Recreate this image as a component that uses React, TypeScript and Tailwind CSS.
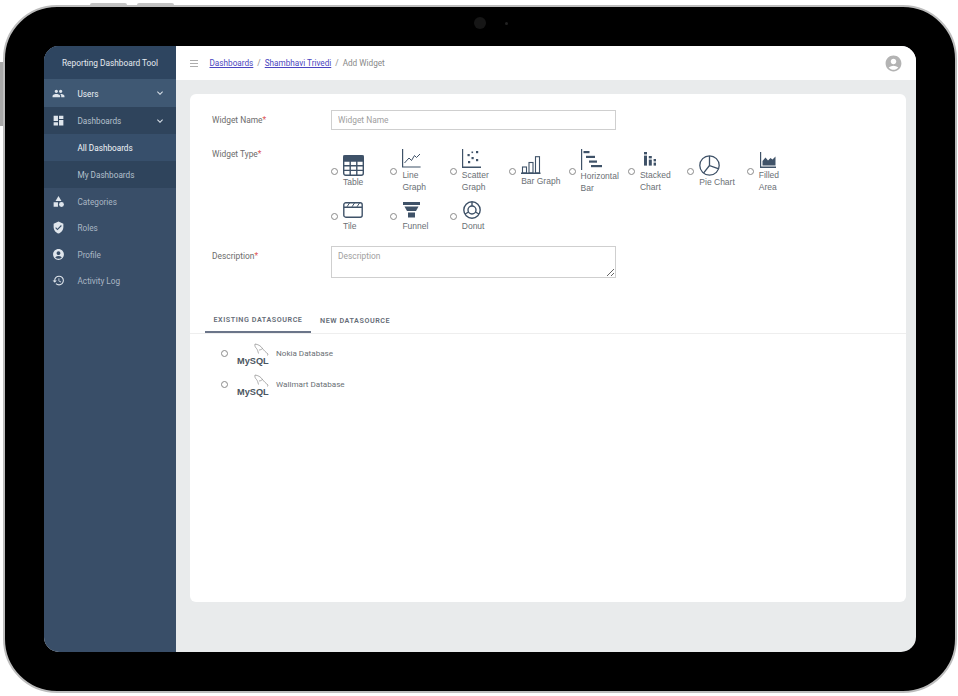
import React from "react";
import { MdPeople, MdDashboard, MdCategory, MdVerifiedUser, MdAccountCircle, MdHistory, MdExpandMore } from "react-icons/md";

const ink = "#3f5268";

const Ico = {
  table: (
    <svg width="21" height="21" viewBox="0 0 21 21" fill="none" stroke={ink} strokeWidth="1.4">
      <rect x="0.7" y="0.7" width="19.6" height="19.6" rx="2" />
      <path d="M1 1h19v5H1z" fill={ink} />
      <path d="M7.2 6v14M13.8 6v14M1 10.7h19M1 15.4h19" />
    </svg>
  ),
  line: (
    <svg width="19" height="19" viewBox="0 0 19 19" fill="none" stroke={ink} strokeWidth="1.2">
      <path d="M0.6 0v18h18" />
      <path d="M2.5 14 7 9l2.5 2.500 3-5 2 2 3.500-3.500" strokeWidth="1" />
    </svg>
  ),
  scatter: (
    <svg width="19" height="19" viewBox="0 0 19 19" fill={ink}>
      <path d="M0 0h1.200v17.600H19v1.400H0z" />
      <rect x="5.500" y="5" width="2.200" height="2.200" />
      <rect x="9.500" y="8" width="2.200" height="2.200" />
      <rect x="14" y="2" width="2.200" height="2.200" />
      <rect x="14" y="10" width="2.200" height="2.200" />
      <rect x="6" y="12" width="2.200" height="2.200" />
      <rect x="9.500" y="2.500" width="1.600" height="1.600" />
    </svg>
  ),
  bar: (
    <svg width="20" height="18" viewBox="0 0 20 18" fill="none" stroke={ink} strokeWidth="1.1">
      <path d="M0 17.300h19.500" strokeWidth="1.400" />
      <rect x="1.500" y="11" width="4" height="6" />
      <rect x="8" y="6.500" width="4" height="10.500" />
      <rect x="14.500" y="0.700" width="4" height="16.300" />
    </svg>
  ),
  hbar: (
    <svg width="21" height="21" viewBox="0 0 21 21" fill={ink}>
      <rect x="0" y="0" width="1.200" height="21" />
      <rect x="2.500" y="2" width="6" height="2.200" />
      <rect x="5" y="6.800" width="9" height="2.200" />
      <rect x="8" y="11.500" width="8" height="2.200" />
      <rect x="10" y="16" width="11" height="2.200" />
    </svg>
  ),
  stacked: (
    <svg width="12" height="14" viewBox="0 0 12 14" fill={ink}>
      <rect x="0" y="0" width="3" height="2.400" />
      <rect x="0" y="3.600" width="3" height="10" />
      <rect x="4.800" y="4" width="3" height="2.400" />
      <rect x="4.800" y="7.600" width="3" height="6" />
      <rect x="9.600" y="7" width="2.400" height="2.400" />
      <rect x="9.600" y="10.600" width="2.400" height="3" />
    </svg>
  ),
  pie: (
    <svg width="21" height="21" viewBox="0 0 21 21" fill="none" stroke={ink} strokeWidth="1.300">
      <circle cx="10.500" cy="10.500" r="9.700" />
      <path d="M10.500 1v9.500l8.600 3.200M10.500 10.500l-6 7.600" />
    </svg>
  ),
  filled: (
    <svg width="16" height="16" viewBox="0 0 16 16" fill={ink}>
      <path d="M0 0h1.200v14.600H16V16H0z" />
      <path d="M2.500 13.500V9l3-3.500 2.500 3 2.500-2.500 2 1.500 3-3v9z" />
    </svg>
  ),
  tile: (
    <svg width="20" height="16" viewBox="0 0 20 16" fill="none" stroke={ink} strokeWidth="1.400">
      <rect x="0.800" y="0.800" width="18.400" height="14.400" rx="2" />
      <path d="M1 5.200h18" />
      <path d="M4 4.800 6.500 1M9 4.800 11.500 1M14 4.800 16.500 1" strokeWidth="1" />
    </svg>
  ),
  funnel: (
    <svg width="17" height="16" viewBox="0 0 17 16" fill={ink}>
      <rect x="0" y="0" width="17" height="3" />
      <path d="M1.500 4.500h14L13 9H4z" />
      <rect x="5" y="10.500" width="7" height="5" />
    </svg>
  ),
  donut: (
    <svg width="18" height="18" viewBox="0 0 18 18" fill="none" stroke={ink} strokeWidth="1.400">
      <circle cx="9" cy="9" r="8.200" />
      <circle cx="9" cy="9" r="4" />
      <path d="M9 1v4M2 13l3.600-2M16 13l-3.600-2" />
    </svg>
  ),
};

const types: { label: string; icon: React.ReactNode; cls: string }[] = [
  { label: "Table", icon: Ico.table, cls: "mb-0" },
  { label: "Line\nGraph", icon: Ico.line, cls: "mb-[1px]" },
  { label: "Scatter\nGraph", icon: Ico.scatter, cls: "mb-[1px]" },
  { label: "Bar Graph", icon: Ico.bar, cls: "mb-[1px]" },
  { label: "Horizontal\nBar", icon: Ico.hbar, cls: "mb-0" },
  { label: "Stacked\nChart", icon: Ico.stacked, cls: "mt-[2px] mb-[3px] ml-[4px]" },
  { label: "Pie Chart", icon: Ico.pie, cls: "mb-0" },
  { label: "Filled\nArea", icon: Ico.filled, cls: "mt-[2px] mb-[1px] ml-[1px]" },
  { label: "Tile", icon: Ico.tile, cls: "mt-[2px] mb-[2px]" },
  { label: "Funnel", icon: Ico.funnel, cls: "mt-[2px] mb-[2px] ml-[1px]" },
  { label: "Donut", icon: Ico.donut, cls: "mb-[1px] ml-[1px]" },
];

function Radio() {
  return <span className="block w-[7px] h-[7px] rounded-full border border-[#8a8a8a] bg-white shrink-0" />;
}

function NavRow({ icon, label, cls, chevron, textCls }: { icon?: React.ReactNode; label: string; cls: string; chevron?: boolean; textCls: string }) {
  return (
    <div className={`flex items-center pl-[8px] pr-[10px] ${cls}`}>
      <span className="w-[25.500px] flex justify-start text-[#dfe5ec] text-[13px]">{icon}</span>
      <span className={`flex-1 text-[8.2px] leading-[12px] pt-[1px] ${textCls}`}>{label}</span>
      {chevron && <MdExpandMore className="text-[#d7dee6] text-[12px]" />}
    </div>
  );
}

function MySql() {
  return (
    <span className="relative block w-[32px] h-[24px] shrink-0">
      <svg className="absolute left-[17px] top-0" width="15" height="14" viewBox="0 0 15 14" fill="none" stroke="#777" strokeWidth="0.6">
        <path d="M1 1c3 .5 5.500 1.500 7.500 4.500 1.500 2 3 3.500 5.500 5.500l-.5 1.500M1 1c-.5 2 .5 3.500 1.500 4.500s1.500 3 2 5M8.500 5.500C7.500 6.500 6 7 5 7" />
      </svg>
      <span className="absolute left-0 bottom-0 text-[9.200px] leading-[11px] font-bold text-[#4a5560] [font-family:'Liberation_Sans',sans-serif]">MySQL</span>
    </span>
  );
}

export default function App() {
  return (
    <div className="relative w-[958px] h-[696px] bg-white pl-[3px] pt-[5px] overflow-hidden [font-family:'Roboto',sans-serif]">
      <span className="absolute left-[90px] top-[3px] w-[37px] h-[2px] rounded-t-[2px] bg-[#c4c4c4]" />
      <span className="absolute left-[137px] top-[3px] w-[37px] h-[2px] rounded-t-[2px] bg-[#c4c4c4]" />
      <span className="absolute left-0 top-[62px] w-[3px] h-[64px] bg-[#a8a8a8]" />
      <div className="relative w-[954px] h-[688px] rounded-[54px] border-2 border-[#bdbdbd] bg-black p-[39px]">
        <span className="absolute left-[469px] top-[10px] w-[12px] h-[12px] rounded-full bg-[#161616]" />
        <span className="absolute left-[500px] top-[15px] w-[3px] h-[3px] rounded-full bg-[#222222]" />
        <div className="flex w-[872px] h-[606px] rounded-[15px] overflow-hidden bg-[#e9ebec]">
          <aside className="w-[132px] shrink-0 bg-[#394e68] flex flex-col">
            <div className="h-[33px] bg-[#2e4560] flex items-center justify-center text-[8.300px] pt-[2px] text-[#e6ebf0]">Reporting Dashboard Tool</div>
            <NavRow icon={<MdPeople />} label="Users" cls="h-[28px] bg-[#3f5873]" chevron textCls="text-[#eef2f6]" />
            <NavRow icon={<MdDashboard />} label="Dashboards" cls="h-[27px] bg-[#2f445c]" chevron textCls="text-[#b4c0cd]" />
            <NavRow label="All Dashboards" cls="h-[27px] bg-[#374f6b]" textCls="text-[#f2f5f8]" />
            <NavRow label="My Dashboards" cls="h-[27px] bg-[#2f445c]" textCls="text-[#b4c0cd]" />
            <NavRow icon={<MdCategory />} label="Categories" cls="h-[26px]" textCls="text-[#a9b6c4]" />
            <NavRow icon={<MdVerifiedUser />} label="Roles" cls="h-[27px]" textCls="text-[#a9b6c4]" />
            <NavRow icon={<MdAccountCircle />} label="Profile" cls="h-[26px]" textCls="text-[#a9b6c4]" />
            <NavRow icon={<MdHistory />} label="Activity Log" cls="h-[27px]" textCls="text-[#a9b6c4]" />
          </aside>
          <main className="flex-1 flex flex-col min-w-0">
            <header className="h-[34px] bg-white flex items-center pl-[14px] pr-[15px] text-[8.200px] text-[#888]">
              <svg width="8" height="7" viewBox="0 0 8 7" stroke="#8a8a8a" strokeWidth="0.7" className="mr-[11.500px]"><path d="M0 .5h8M0 3.500h8M0 6.500h8" /></svg>
              <span className="underline text-[#4a45c0]">Dashboards</span>
              <span className="mx-[4px]">/</span>
              <span className="underline text-[#4a45c0]">Shambhavi Trivedi</span>
              <span className="mx-[4px]">/</span>
              <span>Add Widget</span>
              <span className="ml-auto text-[#b3b3b3] text-[19px] mr-[-2px]"><MdAccountCircle /></span>
            </header>
            <div className="flex-1 pt-[14px] pl-[14px] pr-[10px] pb-[50px]">
              <section className="h-full bg-white rounded-[6px] px-[22px] pt-[16px] text-[#6c6c6c]">
                <div className="flex">
                  <label className="w-[119px] text-[8.400px] pt-[4px] leading-[12px]">Widget Name<span className="text-[#d55]">*</span></label>
                  <input readOnly placeholder="Widget Name" className="w-[285px] h-[20px] border border-[#cfcfcf] px-[6px] text-[8.400px] outline-none placeholder:text-[#a0a0a0]" />
                </div>
                <div className="flex mt-[18px]">
                  <label className="w-[119px] text-[8.400px] leading-[12px]">Widget Type<span className="text-[#d55]">*</span></label>
                  <div className="grid grid-cols-[repeat(8,59.4px)] grid-rows-[46px_32px] gap-y-[6px] [font-family:'Liberation_Sans',sans-serif]">
                    {types.map((t) => (
                      <div key={t.label} className="flex items-center">
                        <Radio />
                        <div className="ml-[5px] flex flex-col items-start">
                          <span className={`block ${t.cls}`}>{t.icon}</span>
                          <span className="text-[8.500px] leading-[12px] whitespace-pre-line text-[#6a6f75]">{t.label}</span>
                        </div>
                      </div>
                    ))}
                  </div>
                </div>
                <div className="flex mt-[14px]">
                  <label className="w-[119px] text-[8.400px] pt-[4px] leading-[12px]">Description<span className="text-[#d55]">*</span></label>
                  <textarea readOnly placeholder="Description" className="block w-[285px] h-[32px] border border-[#cfcfcf] px-[6px] py-[3px] text-[8.400px] outline-none placeholder:text-[#a0a0a0]" />
                </div>
                <div className="flex mt-[32px] -mx-[22px] pl-[15px] border-b border-[#eeeeee] h-[24px] text-[7.200px] font-semibold tracking-[0.55px] text-[#666d78]">
                  <div className="w-[106px] h-[23px] border-b-2 border-[#6b7589] flex items-center justify-center">EXISTING DATASOURCE</div>
                  <div className="ml-[9px] h-[23px] flex items-center">NEW DATASOURCE</div>
                </div>
                <div className="pl-[9px] pt-[9px] flex flex-col gap-[7px] text-[8.100px]">
                  {["Nokia Database", "Wallmart Database"].map((n) => (
                    <div key={n} className="flex items-start h-[24px]">
                      <span className="mt-[7px] mr-[9px]"><Radio /></span>
                      <MySql />
                      <span className="ml-[7px] mt-[4px] leading-[12px] text-[#6a6f75]">{n}</span>
                    </div>
                  ))}
                </div>
              </section>
            </div>
          </main>
        </div>
      </div>
    </div>
  );
}
